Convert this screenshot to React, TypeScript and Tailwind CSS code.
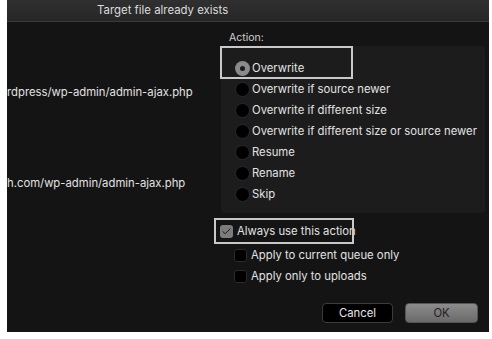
import { Check } from 'lucide-react';

const options = [
    'Overwrite',
    'Overwrite if source newer',
    'Overwrite if different size',
    'Overwrite if different size or source newer',
    'Resume',
    'Rename',
    'Skip',
];

function Radio({ selected }: { selected?: boolean }) {
    if (selected) {
        return (
            <span className="flex h-[15px] w-[15px] shrink-0 items-center justify-center rounded-full bg-[#8a8a8a]">
                <span className="h-[5px] w-[5px] rounded-full bg-[#1a1a1a]" />
            </span>
        );
    }
    return <span className="h-[15px] w-[15px] shrink-0 rounded-full border border-[#2a2a2a] bg-black" />;
}

function Checkbox({ checked }: { checked?: boolean }) {
    if (checked) {
        return (
            <span className="flex h-[13px] w-[13px] shrink-0 items-center justify-center rounded-[3px] bg-[#7c7c7c]">
                <Check className="h-[11px] w-[11px] text-[#111]" strokeWidth={2} />
            </span>
        );
    }
    return <span className="h-[13px] w-[13px] shrink-0 rounded-[3px] border border-[#2a2a2a] bg-black" />;
}

export default function App() {
    return (
        <div className="h-[339px] w-[492px] whitespace-nowrap bg-white pb-[7px] pl-[7px] pr-[3px] font-['Inter',sans-serif] text-[11.3px] text-[#e2e2e2]">
            <div className="flex h-full flex-col bg-[#141414]">
                <div className="flex h-[22px] items-center border-b border-[#3a3a3a] bg-gradient-to-b from-[#303030] to-[#262626] pl-[90px] text-[11.4px] text-[#dcdcdc]">
                    Target file already exists
                </div>

                <div className="flex flex-1">
                    <div className="w-[207px] shrink-0 overflow-hidden">
                        <div className="mt-[62px] leading-[16px]">rdpress/wp-admin/admin-ajax.php</div>
                        <div className="mt-[75px] leading-[16px]">h.com/wp-admin/admin-ajax.php</div>
                    </div>

                    <div className="flex flex-1 flex-col">
                        <div className="ml-[15px] mt-[9px] h-[14px] text-[10.5px] leading-[14px] text-[#cfcfcf]">Action:</div>

                        <div className="relative ml-[7px] mr-[4px] mt-[1px] h-[167px] rounded-[4px] bg-[#1c1c1c] pl-[14px] pt-[12px]">
                            <div className="absolute left-[-1px] top-0 h-[33px] w-[133px] border-2 border-[#c9c9c9]" />
                            {options.map((o, i) => (
                                <div key={o} className="flex h-[21px] items-center gap-[2px]">
                                    <Radio selected={i === 0} />
                                    <span>{o}</span>
                                </div>
                            ))}
                        </div>

                        <div className="relative mt-[5px] flex h-[26px] items-center gap-[4px] pl-[6px]">
                            <div className="absolute left-0 top-0 h-[26px] w-[140px] border-2 border-[#c9c9c9]" />
                            <Checkbox checked />
                            <span>Always use this action</span>
                        </div>
                        <div className="mt-[1px] flex h-[21px] items-center gap-[4px] pl-[20px]">
                            <Checkbox />
                            <span>Apply to current queue only</span>
                        </div>
                        <div className="flex h-[21px] items-center gap-[4px] pl-[20px]">
                            <Checkbox />
                            <span>Apply only to uploads</span>
                        </div>

                        <div className="mt-[16px] flex gap-[12px] pl-[108px]">
                            <button className="h-[20px] w-[71px] rounded-[4px] border border-[#3c3c3c] bg-black text-[11.3px] text-[#e6e6e6]">
                                Cancel
                            </button>
                            <button className="h-[20px] w-[73px] rounded-[4px] border border-[#555] bg-gradient-to-b from-[#8c8c8c] to-[#6a6a6a] text-[11.3px] text-[#1e1e1e]">
                                OK
                            </button>
                        </div>
                    </div>
                </div>
            </div>
        </div>
    );
}
